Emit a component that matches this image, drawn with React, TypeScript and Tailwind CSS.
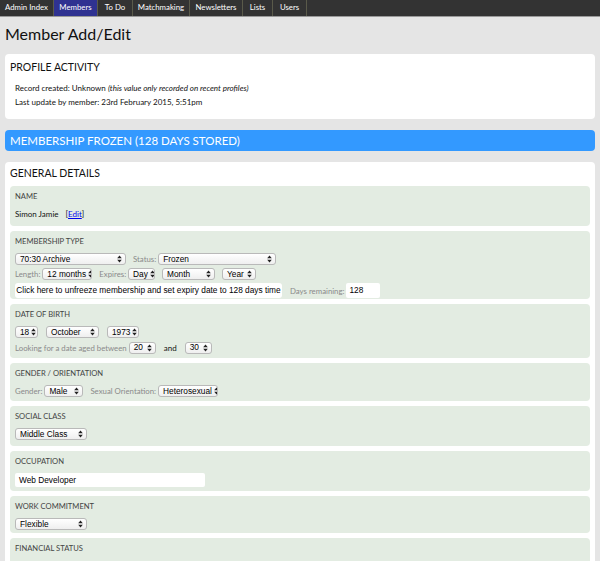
import React from "react";

const Arrows = () => (
  <svg width="5" height="8" viewBox="0 0 5 8" className="ml-auto shrink-0">
    <path d="M2.5 0.5 L4.8 3.2 L0.2 3.2 Z" fill="#222" />
    <path d="M2.5 7.5 L4.8 4.8 L0.2 4.8 Z" fill="#222" />
  </svg>
);

const Sel = ({ w, children }: { w: number; children: React.ReactNode }) => (
  <span
    className="flex shrink-0 items-center h-[12px] pl-[4px] pr-[3px] border border-[#b9b9b9] rounded-[3px] bg-gradient-to-b from-white to-[#efefef] text-[8.3px] leading-none text-black font-['Liberation_Sans',sans-serif] overflow-hidden"
    style={{ width: w }}
  >
    <span className="mr-[2px] whitespace-nowrap">{children}</span>
    <Arrows />
  </span>
);

const Lbl = ({ children }: { children: React.ReactNode }) => (
  <span className="text-[7.8px] leading-[12px] text-[#8a8a8a] whitespace-nowrap">{children}</span>
);

const Box = ({ title, children, pb = "pb-[6px]" }: { title: string; children?: React.ReactNode; pb?: string }) => (
  <div className={`bg-[#e3ece2] rounded-[4px] px-[5px] pt-[4px] ${pb}`}>
    <div className="text-[7.6px] text-[#444] leading-[12px] mb-[6px]">{title}</div>
    {children}
  </div>
);

export default function App() {
  const nav = [
    ["Admin Index", 54],
    ["Members", 44],
    ["To Do", 35],
    ["Matchmaking", 57],
    ["Newsletters", 53],
    ["Lists", 30],
    ["Users", 34],
  ] as const;
  return (
    <div className="min-h-[561px] bg-[#e5e5e5] font-['Lato',sans-serif] text-[#222]">
      <div className="flex h-[17px] bg-[#333333] border-b border-[#999]">
        {nav.map(([n, w]) => (
          <div
            key={n}
            className={`flex items-center justify-center text-[7.8px] text-white border-r border-[#5a5a4a] ${n === "Members" ? "bg-[#2f3291]" : ""}`}
            style={{ width: w }}
          >
            {n}
          </div>
        ))}
      </div>
      <h1 className="text-[16px] leading-[24px] px-[5px] pt-[5px] pb-[8px] text-[#111]">Member Add/Edit</h1>
      <div className="mx-[5px] bg-white rounded-[4px] px-[5px] pt-[5px] pb-[10px]">
        <div className="text-[10.5px] leading-[16px] text-[#111] mb-[6px]">PROFILE ACTIVITY</div>
        <div className="pl-[5px] text-[8px] leading-[14px] text-[#111]">
          <div>
            Record created: Unknown <i className="italic">(this value only recorded on recent profiles)</i>
          </div>
          <div>Last update by member: 23rd February 2015, 5:51pm</div>
        </div>
      </div>
      <div className="mx-[5px] mt-[11px] bg-[#3399ff] rounded-[4px] h-[21px] flex items-center px-[5px] text-white text-[11.5px]">
        MEMBERSHIP FROZEN (128 DAYS STORED)
      </div>
      <div className="mx-[5px] mt-[11px] bg-white rounded-t-[4px] px-[5px] pt-[3px]">
        <div className="text-[10.5px] leading-[16px] text-[#111] mb-[5px]">GENERAL DETAILS</div>
        <div className="flex flex-col gap-[5px]">
          <Box title="NAME" pb="pb-[6px]">
            <div className="text-[8px] leading-[12px] text-[#111]">
              Simon Jamie <span className="ml-[5px]">[<span className="text-[#0000ee] underline">Edit</span>]</span>
            </div>
          </Box>
          <Box title="MEMBERSHIP TYPE" pb="pb-[1px]">
            <div className="flex items-center gap-[7px] mb-[3px]">
              <Sel w={111}>70:30 Archive</Sel>
              <span className="flex items-center gap-[2px]">
                <Lbl>Status:</Lbl>
                <Sel w={118}>Frozen</Sel>
              </span>
            </div>
            <div className="flex items-center gap-[7px] mb-[3px]">
              <span className="flex items-center gap-[2px]">
                <Lbl>Length:</Lbl>
                <Sel w={50}>12 months</Sel>
              </span>
              <span className="flex items-center gap-[2px]">
                <Lbl>Expires:</Lbl>
                <Sel w={27}>Day</Sel>
              </span>
              <Sel w={53}>Month</Sel>
              <Sel w={34}>Year</Sel>
            </div>
            <div className="flex items-center gap-[8px]">
              <span className="h-[15px] w-[267px] shrink-0 bg-white rounded-[3px] flex items-center justify-center text-[8.3px] font-['Liberation_Sans',sans-serif] text-black whitespace-nowrap">
                Click here to unfreeze membership and set expiry date to 128 days time
              </span>
              <span className="flex items-center gap-[2px]">
                <Lbl>Days remaining:</Lbl>
                <span className="h-[15px] w-[34px] bg-white rounded-[2px] flex items-center px-[3px] text-[8.3px] font-['Liberation_Sans',sans-serif] text-black">128</span>
              </span>
            </div>
          </Box>
          <Box title="DATE OF BIRTH" pb="pb-[4px]">
            <div className="flex items-center gap-[8px] mb-[3px]">
              <Sel w={23}>18</Sel>
              <Sel w={53}>October</Sel>
              <Sel w={32}>1973</Sel>
            </div>
            <div className="flex items-center gap-[2px] h-[13px]">
              <Lbl>Looking for a date aged between</Lbl>
              <Sel w={27}>20</Sel>
              <span className="text-[8px] text-[#111] mx-[6px]">and</span>
              <Sel w={27}>30</Sel>
            </div>
          </Box>
          <Box title="GENDER / ORIENTATION" pb="pb-[4px]">
            <div className="flex items-center gap-[7px]">
              <span className="flex items-center gap-[2px]">
                <Lbl>Gender:</Lbl>
                <Sel w={39}>Male</Sel>
              </span>
              <span className="flex items-center gap-[2px]">
                <Lbl>Sexual Orientation:</Lbl>
                <Sel w={60}>Heterosexual</Sel>
              </span>
            </div>
          </Box>
          <Box title="SOCIAL CLASS" pb="pb-[6px]">
            <Sel w={72}>Middle Class</Sel>
          </Box>
          <Box title="OCCUPATION" pb="pb-[4px]">
            <span className="h-[14px] w-[190px] bg-white rounded-[2px] flex items-center px-[4px] text-[8.3px] font-['Liberation_Sans',sans-serif] text-black">Web Developer</span>
          </Box>
          <Box title="WORK COMMITMENT" pb="pb-[3px]">
            <Sel w={72}>Flexible</Sel>
          </Box>
          <Box title="FINANCIAL STATUS">
            <div className="h-[20px]" />
          </Box>
        </div>
      </div>
    </div>
  );
}
